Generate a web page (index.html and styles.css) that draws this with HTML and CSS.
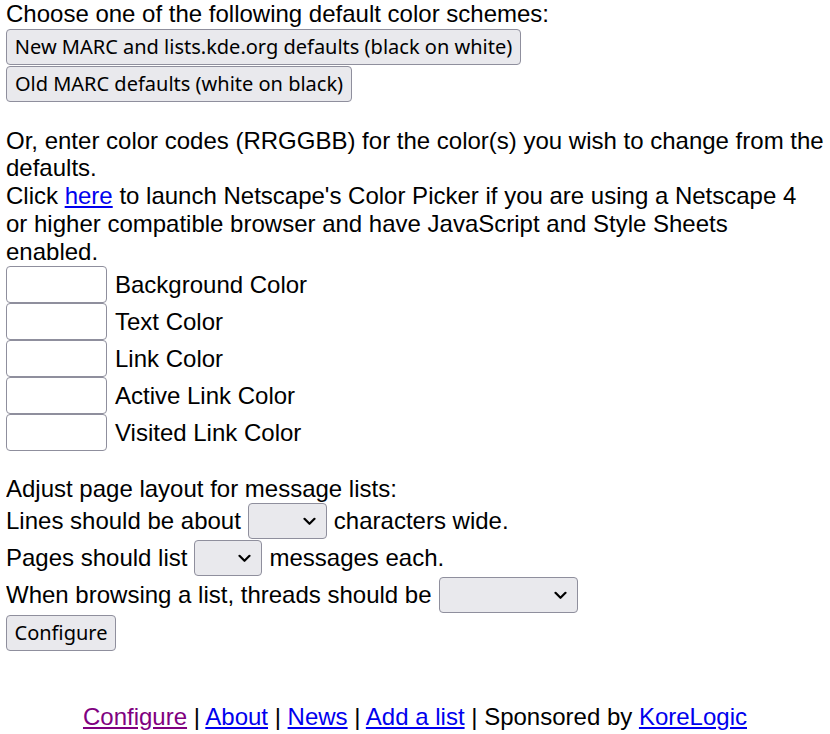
FILE: index.html
```html
<!DOCTYPE html>
<html>
<head>
<meta charset="utf-8">
<link rel="stylesheet" href="styles.css">
</head>
<body>
<form class="page">
  <div class="line">Choose one of the following default color schemes:</div>
  <div class="btnrow"><button type="button" class="btn btn-wide">New MARC and lists.kde.org defaults (black on white)</button></div>
  <div class="btnrow"><button type="button" class="btn btn-old">Old MARC defaults (white on black)</button></div>

  <div class="para para-colors">
    <div class="line">Or, enter color codes (RRGGBB) for the color(s) you wish to change from the defaults.</div>
    <div class="line">Click <a class="link" href="#">here</a> to launch Netscape's Color Picker if you are using a Netscape 4 or higher compatible browser and have JavaScript and Style Sheets enabled.</div>
  </div>

  <div class="fields">
    <div class="field"><span class="textbox"></span><span>Background Color</span></div>
    <div class="field"><span class="textbox"></span><span>Text Color</span></div>
    <div class="field"><span class="textbox"></span><span>Link Color</span></div>
    <div class="field"><span class="textbox"></span><span>Active Link Color</span></div>
    <div class="field"><span class="textbox"></span><span>Visited Link Color</span></div>
  </div>

  <div class="para">
    <div class="line">Adjust page layout for message lists:</div>
  </div>
  <div class="selrow">
    <span>Lines should be about</span>
    <span class="sel sel-lines"><svg class="chev" width="13" height="9" viewBox="0 0 13 9"><path d="M1.5 1.8 L6.5 6.8 L11.5 1.8" fill="none" stroke="#000" stroke-width="2.2" stroke-linecap="round" stroke-linejoin="round"/></svg></span>
    <span>characters wide.</span>
  </div>
  <div class="selrow">
    <span>Pages should list</span>
    <span class="sel sel-pages"><svg class="chev" width="13" height="9" viewBox="0 0 13 9"><path d="M1.5 1.8 L6.5 6.8 L11.5 1.8" fill="none" stroke="#000" stroke-width="2.2" stroke-linecap="round" stroke-linejoin="round"/></svg></span>
    <span>messages each.</span>
  </div>
  <div class="selrow">
    <span>When browsing a list, threads should be</span>
    <span class="sel sel-threads"><svg class="chev" width="13" height="9" viewBox="0 0 13 9"><path d="M1.5 1.8 L6.5 6.8 L11.5 1.8" fill="none" stroke="#000" stroke-width="2.2" stroke-linecap="round" stroke-linejoin="round"/></svg></span>
  </div>
  <div class="btnrow"><button type="button" class="btn btn-conf">Configure</button></div>
</form>

<div class="footer">
  <a class="link visited" href="#">Configure</a> | <a class="link" href="#">About</a> | <a class="link" href="#">News</a> | <a class="link" href="#">Add a list</a> | Sponsored by <a class="link" href="#">KoreLogic</a>
</div>
</body>
</html>
```

FILE: styles.css
```css
html, body {
  background: #ffffff;
}
body {
  margin: 0 6px;
  font-family: "Liberation Sans", Arial, sans-serif;
  font-size: 24px;
  line-height: 27.6px;
  color: #000000;
}
.page {
  display: flex;
  flex-direction: column;
  margin: 0;
}
.line {
  margin: 0;
}
.btnrow {
  display: flex;
  height: 37px;
  align-items: flex-start;
  padding-top: 1px;
  box-sizing: border-box;
}
.btn {
  font-family: "Noto Sans", sans-serif;
  font-size: 20px;
  line-height: 26px;
  white-space: nowrap;
  text-align: center;
  color: #000;
  background: #e9e9ed;
  border: 1px solid #8f8f9d;
  border-radius: 4px;
  height: 36px;
  padding: 0;
  margin: 0;
  box-sizing: border-box;
}
.btn-wide { width: 515px; }
.btn-old { width: 346px; }
.btn-conf { width: 110px; }
.para {
  margin-top: 24px;
}
.para-colors {
  margin-top: 25px;
  line-height: 27.8px;
}
.link {
  color: #0000ee;
  text-decoration: underline;
}
.link.visited {
  color: #800080;
}
.fields {
  display: flex;
  flex-direction: column;
  padding-top: 0.5px;
}
.field {
  display: flex;
  align-items: center;
  gap: 8px;
  height: 37px;
}
.textbox {
  display: block;
  width: 101px;
  height: 37px;
  box-sizing: border-box;
  border: 1.5px solid #8f8f9d;
  border-radius: 4px;
  background: #fff;
}
.selrow {
  display: flex;
  align-items: center;
  gap: 7px;
  height: 37px;
}
.sel {
  position: relative;
  display: block;
  height: 36px;
  box-sizing: border-box;
  background: #e9e9ed;
  border: 1px solid #8f8f9d;
  border-radius: 4px;
}
.sel-lines { width: 79px; }
.sel-pages { width: 68px; }
.sel-threads { width: 139px; }
.chev {
  position: absolute;
  right: 10px;
  top: 13px;
}
.footer {
  margin-top: 52px;
  text-align: center;
}
```
